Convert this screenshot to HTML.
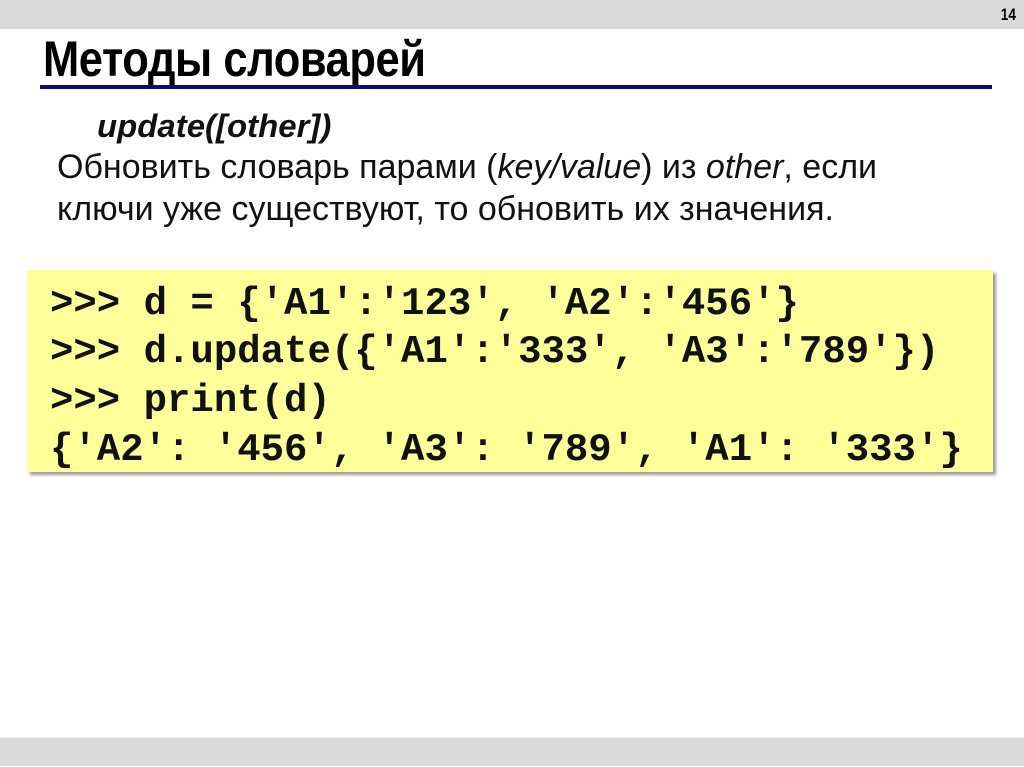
<!DOCTYPE html>
<html><head><meta charset="utf-8"><style>
body{margin:0;width:1024px;height:767px;position:relative;background:#fff;overflow:hidden;font-family:"Liberation Sans",sans-serif}
.top{position:absolute;left:0;top:0;width:1024px;height:29px;background:#d9d9d9}
.num{position:absolute;right:8px;top:5px;font-size:17px;font-weight:bold;transform:scaleX(.8);transform-origin:right}
.bot{position:absolute;left:0;top:737px;width:1024px;height:28px;background:#d9d9d9;border-top:1px solid #e8e8e8}
h1{position:absolute;left:43px;top:30px;margin:0;font-size:50px;font-weight:bold;white-space:nowrap;letter-spacing:-0.5px;transform:scaleX(.87);transform-origin:left}
.line{position:absolute;left:40px;top:85px;width:952px;height:4px;background:#0a0a80}
.t{position:absolute;white-space:nowrap;color:#111}
.code{position:absolute;left:27px;top:270px;width:966px;height:202px;background:#ffff99;box-shadow:3px 3px 3px #999}
.code div{position:absolute;left:23px;font-family:"Liberation Mono",monospace;font-weight:bold;font-size:39px;white-space:pre;color:#111}
</style></head><body>
<div class="top"><span class="num">14</span></div>
<h1>Методы словарей</h1>
<div class="line"></div>
<div class="t" style="left:97px;top:108px;font-size:32px;font-weight:bold;font-style:italic;transform:scaleX(1.03);transform-origin:left">update([other])</div>
<div class="t" style="left:57px;top:148px;font-size:34px">Обновить словарь парами (<i>key/value</i>) из <i>other</i>, если</div>
<div class="t" style="left:57px;top:190px;font-size:34px">ключи уже существуют, то обновить их значения.</div>
<div class="code">
<div style="top:12px">&gt;&gt;&gt; d = {'A1':'123', 'A2':'456'}</div>
<div style="top:60px">&gt;&gt;&gt; d.update({'A1':'333', 'A3':'789'})</div>
<div style="top:109px">&gt;&gt;&gt; print(d)</div>
<div style="top:158px">{'A2': '456', 'A3': '789', 'A1': '333'}</div>
</div>
<div class="bot"></div>
</body></html>
